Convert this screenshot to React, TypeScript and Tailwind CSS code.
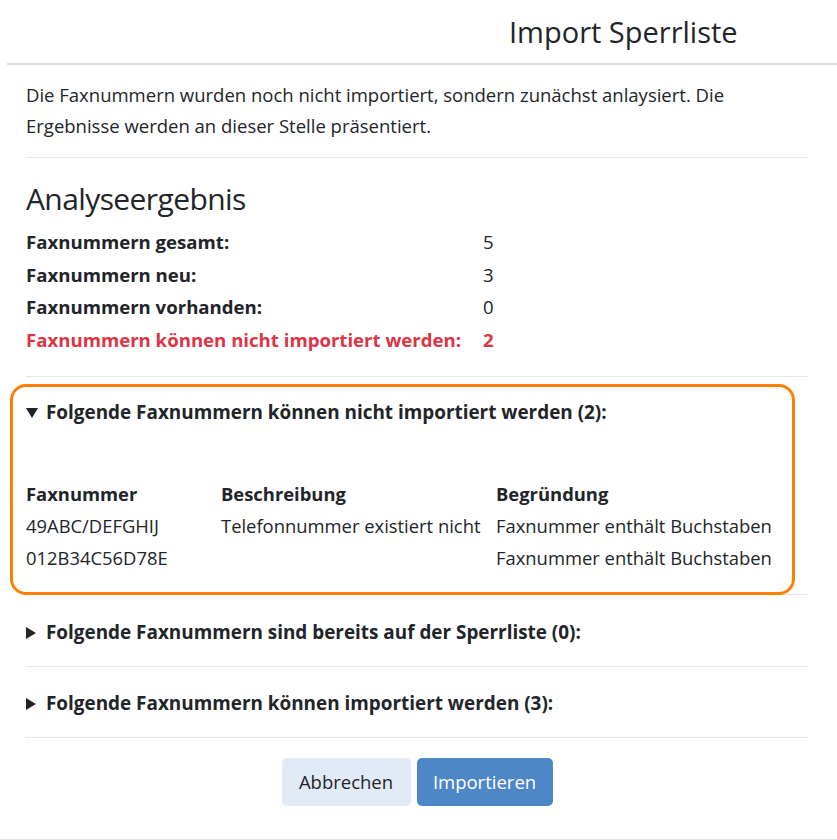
import React from "react";

const font = { fontFamily: '"Open Sans", "Noto Sans", sans-serif' };

function Summary({ open, text }: { open?: boolean; text: string }) {
  return (
    <div className="flex items-center font-bold text-[18.9px] leading-[31px] text-[#212529]">
      <span className="w-[20px] flex items-center">
        {open ? (
          <svg width="12" height="10" viewBox="0 0 12 10"><path d="M0 0H12L6 10Z" fill="#212529" /></svg>
        ) : (
          <svg width="10" height="12" viewBox="0 0 10 12"><path d="M0 0L10 6L0 12Z" fill="#212529" /></svg>
        )}
      </span>
      <span>{text}</span>
    </div>
  );
}

export default function App() {
  return (
    <div className="w-[837px] h-[840px] bg-white relative text-[#212529] border-b border-[#e0e0e0]" style={font}>
      <div className="ml-[7px] h-[65px] border-b-2 border-[#dedede] flex items-center">
        <h1 className="pl-[502px] text-[29px] font-medium leading-none">Import Sperrliste</h1>
      </div>
      <div className="px-[26px] w-[834px]">
        <p className="pt-[14px] text-[18.5px] leading-[31px]">
          Die Faxnummern wurden noch nicht importiert, sondern zunächst anlaysiert. Die Ergebnisse werden an dieser Stelle präsentiert.
        </p>
        <div className="mt-[16px] border-t border-[#e6e6e6]" />
        <h2 className="mt-[23px] text-[30px] leading-[36px] font-medium tracking-[-0.02em]">Analyseergebnis</h2>
        <div className="mt-[9px] grid grid-cols-[457px_auto] text-[18.6px] leading-[32.5px]">
          <div className="font-bold">Faxnummern gesamt:</div>
          <div>5</div>
          <div className="font-bold">Faxnummern neu:</div>
          <div>3</div>
          <div className="font-bold">Faxnummern vorhanden:</div>
          <div>0</div>
          <div className="font-bold text-[#dc3545]">Faxnummern können nicht importiert werden:</div>
          <div className="font-bold text-[#dc3545]">2</div>
        </div>
        <div className="mt-[20px] border-t border-[#e6e6e6]" />
        <div className="pt-[20px] pb-[20px]">
          <Summary open text="Folgende Faxnummern können nicht importiert werden (2):" />
          <div className="mt-[50px] grid grid-cols-[195px_275px_auto] text-[18.4px] leading-[32px]">
            <div className="font-bold">Faxnummer</div>
            <div className="font-bold">Beschreibung</div>
            <div className="font-bold">Begründung</div>
            <div>49ABC/DEFGHIJ</div>
            <div>Telefonnummer existiert nicht</div>
            <div>Faxnummer enthält Buchstaben</div>
            <div>012B34C56D78E</div>
            <div></div>
            <div>Faxnummer enthält Buchstaben</div>
          </div>
        </div>
        <div className="border-t border-[#e6e6e6]" />
        <div className="pt-[22px] pb-[18px]">
          <Summary text="Folgende Faxnummern sind bereits auf der Sperrliste (0):" />
        </div>
        <div className="border-t border-[#e6e6e6]" />
        <div className="pt-[21px] pb-[18px]">
          <Summary text="Folgende Faxnummern können importiert werden (3):" />
        </div>
        <div className="border-t border-[#e6e6e6]" />
        <div className="mt-[20px] flex justify-center gap-[6px]">
          <button className="w-[129px] h-[48px] rounded-[5px] bg-[#e1eaf5] text-[#212529] text-[18.5px]">Abbrechen</button>
          <button className="w-[136px] h-[48px] rounded-[5px] bg-[#4d87c8] text-white text-[18.5px]">Importieren</button>
        </div>
      </div>
      <div className="absolute left-[10px] top-[384px] w-[785px] h-[211px] border-[3.5px] border-[#ff8000] rounded-[16px] pointer-events-none" />
    </div>
  );
}
